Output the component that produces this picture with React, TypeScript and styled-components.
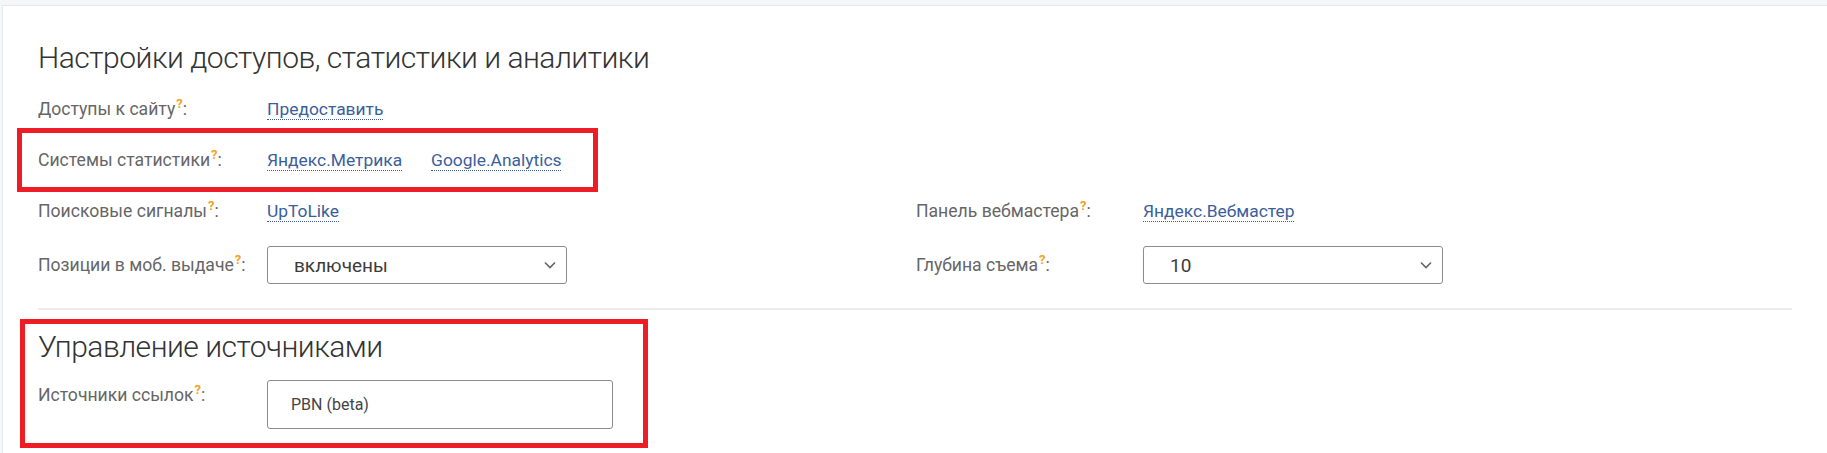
import React from "react";
import styled, { createGlobalStyle } from "styled-components";

const GlobalStyle = createGlobalStyle`
  html, body { margin: 0; padding: 0; }
  body {
    background: #f3f7f8;
    font-family: Roboto, "Noto Sans", Arial, sans-serif;
  }
`;

const Page = styled.div`
  padding: 5px 0 0 2px;
  min-height: 448px;
`;

const Card = styled.div`
  background: #ffffff;
  border-top: 1px solid #e4eaec;
  border-left: 1px solid #e4eaec;
  padding: 34px 35px 0 35px;
  min-height: 413px;
`;

const Title = styled.h2`
  margin: 0;
  font-family: Roboto, sans-serif;
  font-weight: 300;
  font-size: 30px;
  letter-spacing: -0.5px;
  line-height: 36px;
  color: #333;
`;

const Grid = styled.div`
  display: grid;
  grid-template-columns: 878px 1fr;
  margin-top: 14px;
`;

const Row = styled.div<{ $span?: boolean; $h?: number }>`
  display: flex;
  align-items: center;
  height: ${(p) => p.$h ?? 50}px;
  grid-column: ${(p) => (p.$span ? "1 / -1" : "auto")};
`;

const TopRow = styled.div`
  display: flex;
  align-items: flex-start;
  margin-top: 15px;
`;

const Label = styled.div<{ $w?: number; $pt?: number }>`
  width: ${(p) => p.$w ?? 229}px;
  padding-top: ${(p) => p.$pt ?? 0}px;
  flex: none;
  font-size: 17.6px;
  line-height: 22px;
  color: #666;
  white-space: nowrap;
`;

const Hint = styled.sup`
  color: #f5a21b;
  font-weight: 700;
  font-size: 13px;
  vertical-align: 7px;
  line-height: 0;
  margin-left: 1px;
`;

const Links = styled.div`
  display: flex;
  gap: 29px;
`;

const Link = styled.a`
  font-size: 17.4px;
  color: #3b5e9c;
  text-decoration: none;
  border-bottom: 1px dotted #3b5e9c;
  line-height: 20px;
  cursor: pointer;
`;

const Select = styled.div`
  width: 300px;
  height: 38px;
  box-sizing: border-box;
  border: 1px solid #8c8c8c;
  border-radius: 3px;
  display: flex;
  align-items: center;
  justify-content: space-between;
  padding: 0 10px 0 26px;
  font-size: 19px;
  color: #3c3c3c;
`;

const Input = styled.div`
  width: 346px;
  height: 49px;
  box-sizing: border-box;
  border: 1px solid #8c8c8c;
  border-radius: 3px;
  display: flex;
  align-items: center;
  padding: 0 23px;
  font-size: 16px;
  color: #444;
`;

const Highlight = styled.div<{ $w: number }>`
  border: 5px solid #ee1c25;
  margin-left: -21px;
  padding-left: 16px;
  width: ${(p) => p.$w}px;
  box-sizing: border-box;
`;

const Separator = styled.div`
  height: 2px;
  background: #ebebeb;
  margin: 8px 0 9px 0;
  width: 1754px;
`;

const Section2 = styled(Highlight)`
  margin-left: -18px;
  padding: 5px 0 14px 13px;
`;

const Chevron = () => (
  <svg width="12" height="8" viewBox="0 0 12 8" fill="none">
    <path d="M1 1.5 L6 6.5 L11 1.5" stroke="#666" strokeWidth="1.6" />
  </svg>
);

const LabelText: React.FC<{ text: string; w?: number; pt?: number }> = ({ text, w, pt }) => (
  <Label $w={w} $pt={pt}>
    {text}
    <Hint>?</Hint>:
  </Label>
);

export default function App() {
  return (
    <>
      <GlobalStyle />
      <Page>
        <Card>
          <Title>Настройки доступов, статистики и аналитики</Title>
          <Grid>
            <Row $span $h={38}>
              <LabelText text="Доступы к сайту" />
              <Link>Предоставить</Link>
            </Row>
            <Row $span $h={64}>
              <Highlight $w={581}>
                <Row $h={54}>
                  <LabelText text="Системы статистики" />
                  <Links>
                    <Link>Яндекс.Метрика</Link>
                    <Link>Google.Analytics</Link>
                  </Links>
                </Row>
              </Highlight>
            </Row>
            <Row $h={38}>
              <LabelText text="Поисковые сигналы" />
              <Link>UpToLike</Link>
            </Row>
            <Row $h={38}>
              <LabelText text="Панель вебмастера" w={227} />
              <Link>Яндекс.Вебмастер</Link>
            </Row>
            <Row $h={70}>
              <LabelText text="Позиции в моб. выдаче" />
              <Select>
                включены
                <Chevron />
              </Select>
            </Row>
            <Row $h={70}>
              <LabelText text="Глубина съема" w={227} />
              <Select>
                10
                <Chevron />
              </Select>
            </Row>
          </Grid>
          <Separator />
          <Section2 $w={628}>
            <Title>Управление источниками</Title>
            <TopRow>
              <LabelText text="Источники ссылок" w={229} pt={4} />
              <Input>PBN (beta)</Input>
            </TopRow>
          </Section2>
        </Card>
      </Page>
    </>
  );
}
